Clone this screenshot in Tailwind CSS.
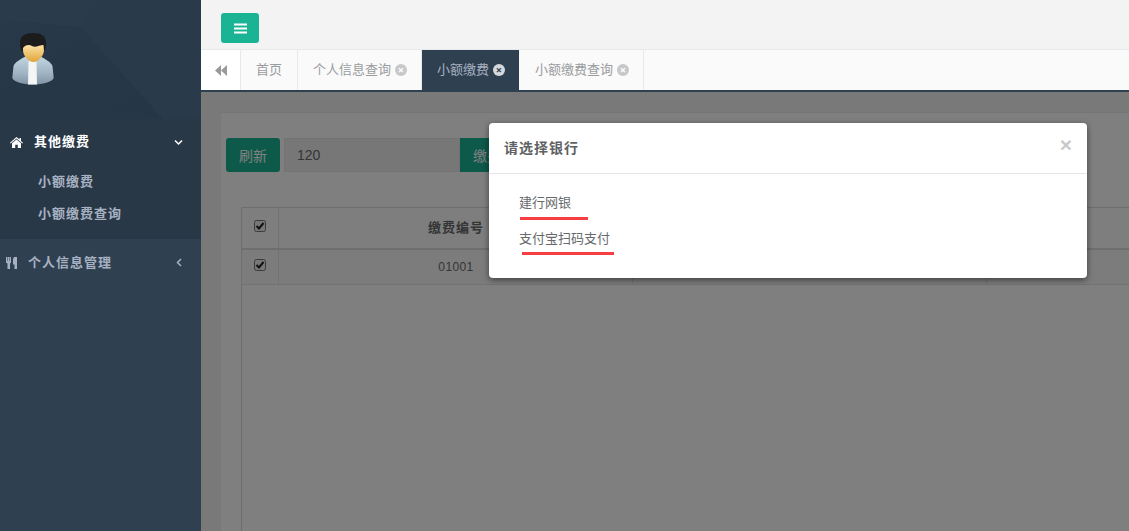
<!DOCTYPE html>
<html lang="zh">
<head>
<meta charset="utf-8">
<script src="https://cdn.jsdelivr.net/npm/@tailwindcss/browser@4"></script>
</head>
<body class="w-[1129px] h-[531px] overflow-hidden bg-[#2f4050] font-['Open_Sans','Noto_Sans_CJK_SC',sans-serif] text-[13px] text-[#676a6c]">
<div class="relative flex h-[531px]">
  <!-- Sidebar -->
  <aside class="w-[201px] shrink-0 h-full bg-[#2f4050] flex flex-col">
    <div class="relative h-[119px] bg-[#283a4a] overflow-hidden">
      <svg class="absolute inset-0" width="201" height="119" viewBox="0 0 201 119">
        <defs>
          <linearGradient id="tri" x1="0" y1="0" x2="1" y2="1"><stop offset="0" stop-color="#27394a"/><stop offset="1" stop-color="#253645"/></linearGradient>
        </defs>
        <polygon points="80,27 100,0 201,0 201,119 163,119" fill="#293b4b"/>
        <polygon points="0,0 100,0 80,27 0,20" fill="#2a3b4b"/>
        <polygon points="0,20 80,27 163,119 0,119" fill="url(#tri)"/>
      </svg>
      <svg class="absolute left-[11px] top-[31px]" width="44" height="55" viewBox="0 0 44 55">
        <defs>
          <linearGradient id="jacket" x1="0" y1="0" x2="0" y2="1"><stop offset="0" stop-color="#c2d6e2"/><stop offset="0.6" stop-color="#a0b4c3"/><stop offset="1" stop-color="#8094a4"/></linearGradient>
          <linearGradient id="face" x1="0" y1="0" x2="0" y2="1"><stop offset="0" stop-color="#fde2a6"/><stop offset="1" stop-color="#e0a539"/></linearGradient>
        </defs>
        <path d="M2.500 35 C4 31 10 28 15 25 L29 25 C34 28 40 31 41.500 35 L42.700 47 C41 51 32 53.500 22 53.500 C12 53.500 3 51 1.300 47 Z" fill="url(#jacket)"/>
        <path d="M17.500 30 L25.500 30 L26 53.500 L17 53.500 Z" fill="#f4f5f5"/>
        <path d="M9 12 C9 5 14 2 22 2 C30 2 35 5 35 12 C35 17 34 20 32 21 L12 21 C10 20 9 17 9 12 Z" fill="#1c1c1d"/>
        <path d="M12 17 C14 14 18 13 21 15 C24 17 29 14 32.500 14 L33 20 C32 26 27 31 22.500 31 C18 31 13 26 12 20 Z" fill="url(#face)"/>
      </svg>
    </div>
    <div class="bg-[#293846] h-[120px] relative">
      <div class="h-[46px] flex items-center pl-[10px] pr-[18px] text-white">
        <svg width="13" height="11" viewBox="0 0 13 11" fill="#fff"><path d="M6.500 0 L9.500 2.600 V1 H11 V3.900 L13 5.700 L12.300 6.400 L6.500 1.500 L.7 6.400 L0 5.700 Z M2 6.300 L6.500 2.500 L11 6.300 V11 H7.800 V7.700 H5.200 V11 H2 Z"/></svg>
        <span class="ml-[11px] font-bold tracking-[1px]">其他缴费</span>
        <svg class="ml-auto" width="9" height="7" viewBox="0 0 9 7" fill="none" stroke="#fff" stroke-width="1.500"><path d="M1 1.500 L4.500 5 L8 1.500"/></svg>
      </div>
      <div class="pl-[38px] font-bold tracking-[1px] text-[#a7b1c2]">
        <div class="h-[33px] flex items-center">小额缴费</div>
        <div class="h-[32px] flex items-center">小额缴费查询</div>
      </div>
    </div>
    <div class="h-[47px] flex items-center pl-[6px] pr-[19px] text-[#a7b1c2] font-bold">
      <svg width="11" height="12" viewBox="0 0 11 12" fill="#a7b1c2"><path d="M0 0 H1.300 V4 H1.800 V0 H3.200 V4 H3.700 V0 H5 V5.500 L4 6.500 V12 H1.500 V6.500 L0 5.500 Z M8 0 H11 V12 H8.500 V7.500 H7 V2 Z"/></svg>
      <span class="ml-[11px] tracking-[1px]">个人信息管理</span>
      <svg class="ml-auto" width="6" height="9" viewBox="0 0 6 9" fill="none" stroke="#a7b1c2" stroke-width="1.500"><path d="M5 1 L1.500 4.500 L5 8"/></svg>
    </div>
  </aside>

  <!-- Main -->
  <main class="relative flex-1 min-w-0 flex flex-col bg-[#f3f3f4]">
    <div class="h-[50px] shrink-0 px-[20px] pt-[13px] border-b border-[#e7eaec]">
      <button class="w-[38px] h-[30px] rounded-[3px] bg-[#1ab394] flex items-center justify-center">
        <svg width="13" height="11" viewBox="0 0 13 11" fill="#fff"><rect width="13" height="2" y="0.500"/><rect width="13" height="2" y="4.500"/><rect width="13" height="2" y="8.500"/></svg>
      </button>
    </div>
    <div class="h-[42px] shrink-0 flex bg-[#fafafa] border-b-2 border-[#2f4050] text-[#999c9e]">
      <div class="w-[40px] bg-white border-r border-[#e7eaec] flex items-center justify-center">
        <svg width="13" height="11" viewBox="0 0 13 11" fill="#9a9a9a"><path d="M7 0 V11 L1 5.500 Z M13 0 V11 L7 5.500 Z"/></svg>
      </div>
      <div class="w-[57px] border-r border-[#e7eaec] flex items-center justify-center">首页</div>
      <div class="w-[124px] border-r border-[#e7eaec] flex items-center pl-[15px] gap-[4px]">个人信息查询
        <span class="w-[12px] h-[12px] rounded-full bg-[#c8c8c8] text-white text-[11px] leading-[12px] text-center font-bold">×</span></div>
      <div class="w-[97px] bg-[#2f4050] text-[#a7b1c2] flex items-center pl-[15px] gap-[4px]">小额缴费
        <span class="w-[12px] h-[12px] rounded-full bg-[#d5d8dc] text-[#2f4050] text-[11px] leading-[12px] text-center font-bold">×</span></div>
      <div class="w-[125px] border-r border-[#e7eaec] flex items-center pl-[16px] gap-[4px]">小额缴费查询
        <span class="w-[12px] h-[12px] rounded-full bg-[#c8c8c8] text-white text-[11px] leading-[12px] text-center font-bold">×</span></div>
    </div>

    <div class="relative flex-1 min-h-0 overflow-hidden pl-[20px] pt-[20px]">
      <div class="flex flex-col bg-white h-full w-[1000px] pl-[5px] pt-[25px] border-t border-[#e7eaec]">
        <div class="flex h-[34px] shrink-0 text-[14px]">
          <button class="w-[54px] rounded-[3px] bg-[#1ab394] text-white">刷新</button>
          <div class="ml-[4px] w-[176px] bg-[#eeeeee] border border-[#e5e6e7] flex items-center pl-[12px] text-[14px] text-[#676a6c] font-['Liberation_Sans','Noto_Sans_CJK_SC',sans-serif]">120</div>
          <button class="w-[54px] bg-[#1ab394] text-white">缴费</button>
        </div>
        <div class="ml-[15px] mt-[35px] flex-1 border-l border-[#dddddd]">
          <table class="w-[1000px] table-fixed border-collapse border-t border-[#dddddd] text-center">
            <colgroup><col class="w-[36px]"><col class="w-[354px]"><col class="w-[354px]"><col></colgroup>
            <thead>
              <tr class="h-[41px] border-b-2 border-[#dddddd] bg-[#fcfcfc]">
                <th class="border-r border-[#e4e4e4] align-top pt-[12px]"><svg class="mx-auto" width="12" height="12" viewBox="0 0 12 12"><rect x=".5" y=".5" width="11" height="11" rx="2" fill="#eeeeee" stroke="#777"/><path d="M2.500 6 L5 8.500 L9.500 3" fill="none" stroke="#222" stroke-width="2"/></svg></th>
                <th class="border-r border-[#e4e4e4] pl-[2px] font-bold tracking-[1px] text-[#676a6c]">缴费编号</th>
                <th class="border-r border-[#e4e4e4]"></th>
                <th></th>
              </tr>
            </thead>
            <tbody>
              <tr class="h-[36px] border-b border-[#e7e7e7] bg-[#f9f9f9]">
                <td class="border-r border-[#e4e4e4] align-top pt-[9px]"><svg class="mx-auto" width="12" height="12" viewBox="0 0 12 12"><rect x=".5" y=".5" width="11" height="11" rx="2" fill="#eeeeee" stroke="#777"/><path d="M2.500 6 L5 8.500 L9.500 3" fill="none" stroke="#222" stroke-width="2"/></svg></td>
                <td class="border-r border-[#e4e4e4] pt-[1px] pl-[2px] font-['Liberation_Sans',sans-serif] text-[12px] tracking-[0.4px]">01001</td>
                <td class="border-r border-[#e4e4e4]"></td>
                <td></td>
              </tr>
            </tbody>
          </table>
        </div>
      </div>
      <!-- backdrop -->
      <div class="absolute inset-0 bg-black/50"></div>
    </div>

    <!-- modal -->
    <div class="absolute left-[288px] top-[123px] w-[598px] h-[155px] bg-white rounded-[4px] shadow-[0_2px_6px_rgba(0,0,0,0.5)]">
      <div class="h-[51px] border-b border-[#e5e5e5] flex items-center px-[15px]">
        <span class="text-[14px] font-bold text-[#5f6264] tracking-[1px] -mt-[2px]">请选择银行</span>
        <span class="ml-auto text-[#c9c9c9] text-[21px] font-bold leading-none font-['Liberation_Sans',sans-serif] -mt-[8px]">×</span>
      </div>
      <div class="relative pl-[30px] pt-[19px] text-[#676a6c] text-[13px]">
        <div class="h-[18px] leading-[18px]">建行网银</div>
        <div class="h-[18px] leading-[18px] mt-[18px]">支付宝扫码支付</div>
        <div class="absolute left-[31px] top-[43px] w-[68px] h-[3px] bg-[#f73f43]"></div>
        <div class="absolute left-[33px] top-[78px] w-[92px] h-[3px] bg-[#f73f43]"></div>
      </div>
    </div>
  </main>
</div>
</body>
</html>
